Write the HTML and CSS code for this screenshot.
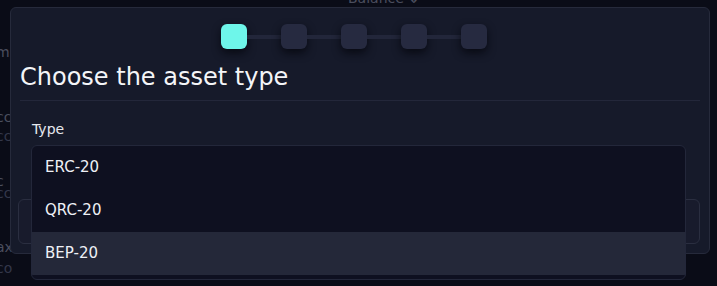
FILE: index.html
```html
<!DOCTYPE html>
<html lang="en">
<head>
  <meta charset="UTF-8" />
  <title>Add asset</title>
  <link rel="stylesheet" href="styles.css">
</head>
<body>
  <div class="backdrop">
    <div class="behind">
      <span class="b1">m</span>
      <span class="b2">cc</span>
      <span class="b3">cc</span>
      <span class="b4">c</span>
      <span class="b5">cc</span>
      <span class="b6">ax</span>
      <span class="b7">co</span>
    </div>
    <div class="balance">Balance &#8661;</div>
  </div>

  <div class="modal">
    <div class="stepper">
      <span class="step active"></span>
      <span class="bar"></span>
      <span class="step"></span>
      <span class="bar"></span>
      <span class="step"></span>
      <span class="bar"></span>
      <span class="step"></span>
      <span class="bar"></span>
      <span class="step"></span>
    </div>
    <h2 class="title">Choose the asset type</h2>
    <div class="body">
      <label class="label">Type</label>
      <div class="field"></div>
      <ul class="menu">
        <li>ERC-20</li>
        <li>QRC-20</li>
        <li class="hover">BEP-20</li>
      </ul>
    </div>
  </div>
</body>
</html>
```

FILE: styles.css
```css
* {
  box-sizing: border-box;
}
body {
  margin: 0;
  width: 717px;
  height: 286px;
  overflow: hidden;
  font-family: 'DejaVu Sans', Verdana, sans-serif;
  background: #0a0c17;
  color: #eef0f6;
  position: relative;
}
.backdrop {
  position: absolute;
  inset: 0;
}
.behind span {
  position: absolute;
  left: -4px;
  font-size: 14px;
  color: #4a4e5e;
}
.b1 { top: 44px; }
.b2 { top: 109px; }
.b3 { top: 128px; color: #33374a !important; }
.b4 { top: 173px; }
.b5 { top: 185px; color: #33374a !important; }
.b6 { top: 239px; }
.b7 { top: 260px; color: #33374a !important; }
.balance {
  position: absolute;
  left: 348px;
  top: -10px;
  font-size: 14px;
  color: #4a4e5e;
}
.modal {
  position: relative;
  margin: 7px 0 0 10px;
  width: 700px;
  height: 247px;
  background: #161a2a;
  border: 1px solid #262a3b;
  border-radius: 6px;
  padding: 0 9px;
}
.stepper {
  display: flex;
  align-items: center;
  padding: 16px 0 0 201px;
}
.step {
  width: 26px;
  height: 25px;
  border-radius: 6px;
  background: #262a40;
  box-shadow: 0 4px 9px rgba(5, 6, 14, 0.8);
}
.step.active {
  background: #6ef6ea;
}
.bar {
  width: 34px;
  height: 4px;
  background: #22263a;
}
.title {
  margin: 12px 0 0;
  padding: 0 0 7px;
  font-size: 24px;
  font-weight: normal;
  line-height: 32px;
  color: #f4f5f8;
  border-bottom: 1px solid #23273a;
}
.body {
  position: relative;
  padding-top: 20px;
}
.label {
  display: block;
  padding-left: 12px;
  font-size: 14px;
  color: #e6e8ee;
}
.field {
  margin: 62px 0 0 -2px;
  width: 682px;
  height: 45px;
  border: 1px solid #2a2e40;
  border-radius: 6px;
  background: #181b2c;
}
.menu {
  position: absolute;
  top: 44px;
  left: 11px;
  width: 655px;
  margin: 0;
  padding: 0 0 4px;
  list-style: none;
  background: #0e1020;
  border: 1px solid #23273a;
  border-radius: 6px;
  overflow: hidden;
}
.menu li {
  height: 43px;
  line-height: 43px;
  padding-left: 13px;
  font-size: 15px;
  color: #eef0f6;
}
.menu li.hover {
  background: #242839;
}
```
